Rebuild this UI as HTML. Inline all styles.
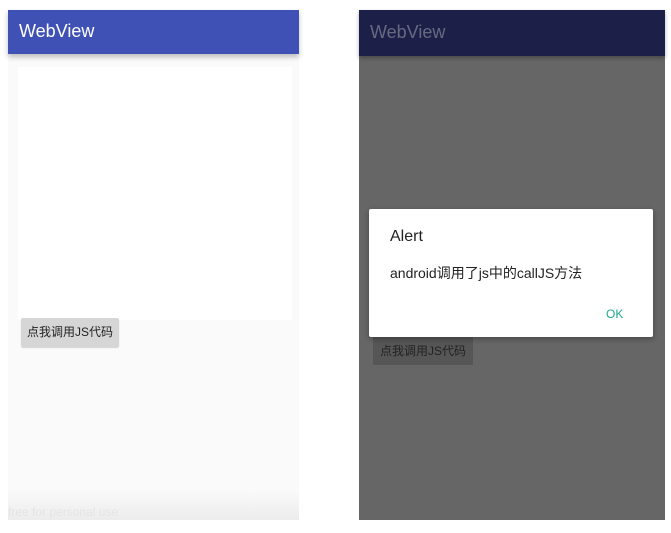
<!DOCTYPE html>
<html><head><meta charset="utf-8"><style>
*{margin:0;padding:0;box-sizing:border-box}
body{width:671px;height:533px;background:#fff;position:relative;overflow:hidden;font-family:"Liberation Sans","Noto Sans CJK SC",sans-serif}
.abs{position:absolute}
</style></head><body>
<!-- left phone -->
<div class="abs" style="left:8px;top:10px;width:291px;height:510px;background:#fafafa"></div>
<div class="abs" style="left:8px;top:490px;width:291px;height:30px;background:linear-gradient(#fafafa,#ececec)"></div>
<div class="abs" style="left:8px;top:10px;width:291px;height:44px;background:#3f51b5;box-shadow:0 3px 5px rgba(0,0,0,.25)"></div>
<div class="abs" style="left:19px;top:21px;color:#fff;font-size:18px">WebView</div>
<div class="abs" style="left:18px;top:67px;width:274px;height:253px;background:#fff"></div>
<div class="abs" style="left:21px;top:318px;width:98px;height:29px;background:#d6d6d6;border-radius:2px;box-shadow:0 1px 1px rgba(0,0,0,.15);font-size:12px;color:#222;line-height:29px;text-align:center">点我调用JS代码</div>
<div class="abs" style="left:8px;top:505px;font-size:12px;color:#e4e4e4">free for personal use</div>
<!-- right phone -->
<div class="abs" style="left:359px;top:10px;width:306px;height:510px;background:#666"></div>
<div class="abs" style="left:359px;top:10px;width:306px;height:46px;background:#1c2049;box-shadow:0 2px 4px rgba(0,0,0,.3)"></div>
<div class="abs" style="left:370px;top:22px;color:#666a80;font-size:18px">WebView</div>
<div class="abs" style="left:373px;top:337px;width:100px;height:28px;background:#565656;font-size:12px;color:#222;line-height:28px;text-align:center">点我调用JS代码</div>
<div class="abs" style="left:369px;top:209px;width:284px;height:128px;background:#fff;border-radius:2px;box-shadow:0 2px 6px rgba(0,0,0,.3)"></div>
<div class="abs" style="left:390px;top:228px;font-size:16px;color:#222">Alert</div>
<div class="abs" style="left:390px;top:263px;font-size:14px;color:#222">android调用了js中的callJS方法</div>
<div class="abs" style="left:606px;top:307px;font-size:12px;color:#1fa890">OK</div>
</body></html>
